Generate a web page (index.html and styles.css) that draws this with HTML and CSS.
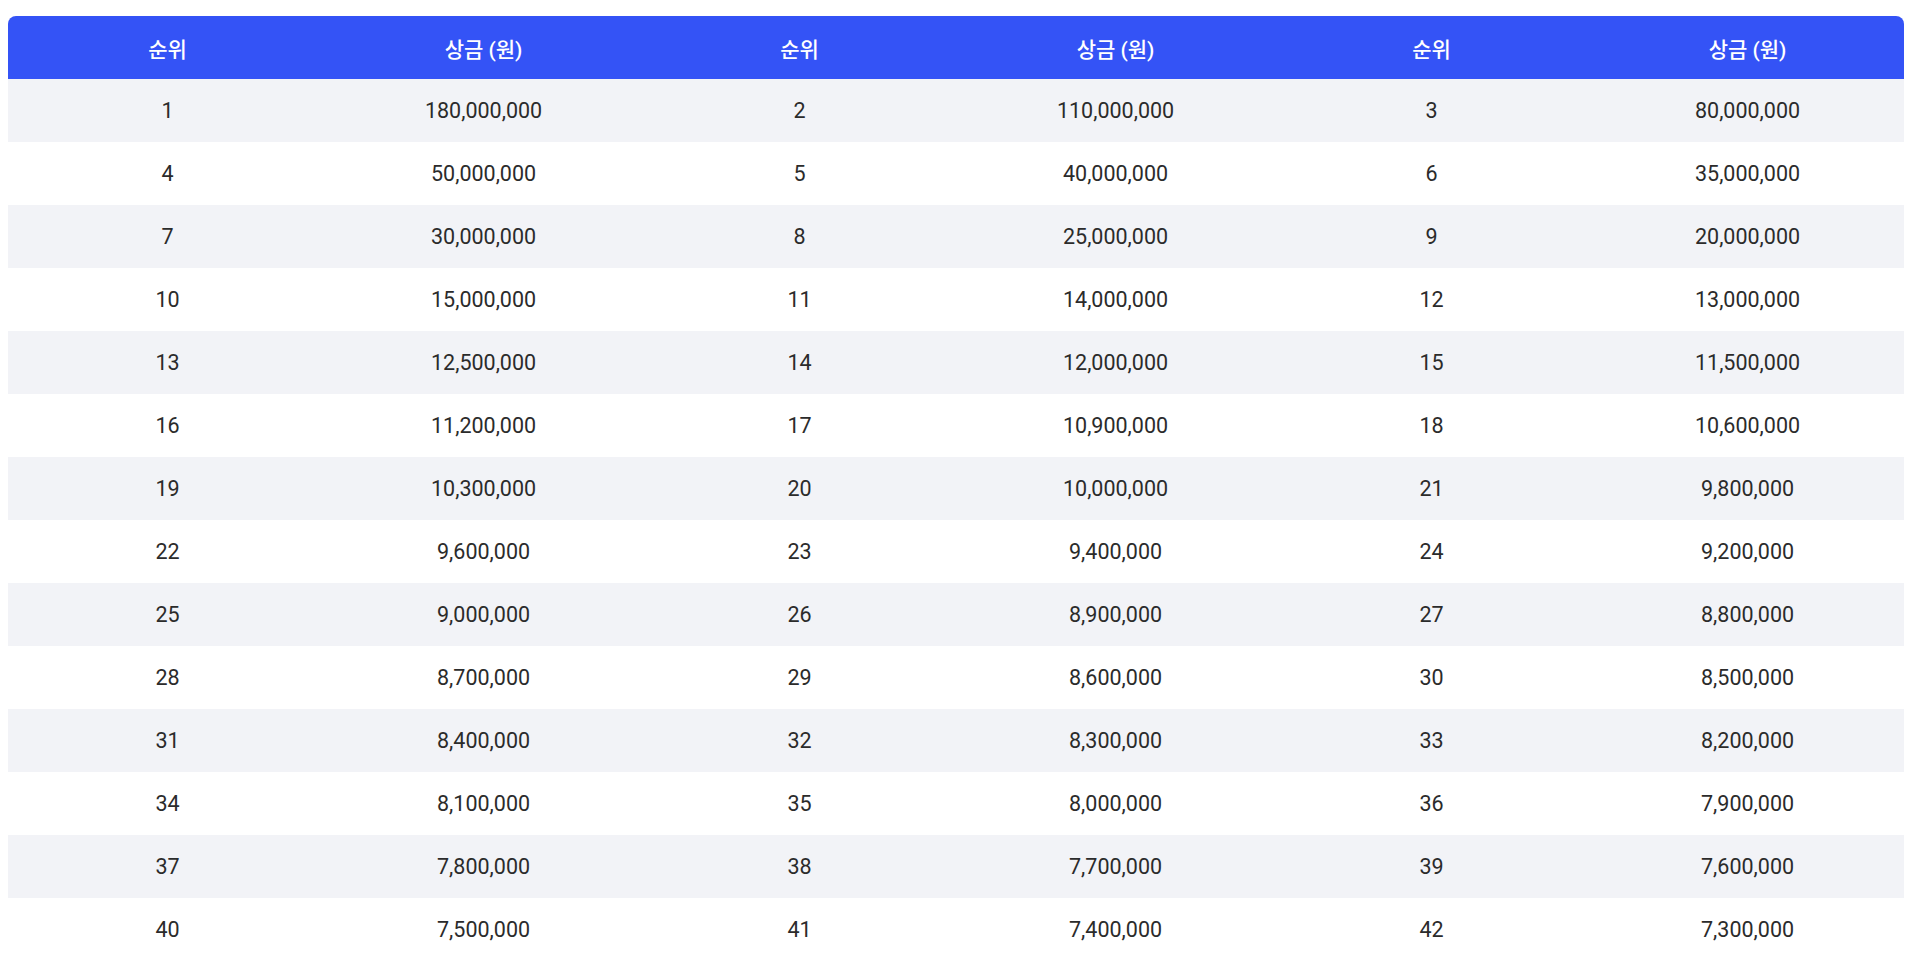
FILE: index.html
```html
<!DOCTYPE html>
<html lang="ko">
<head>
<meta charset="utf-8">
<title>상금표</title>
<link rel="stylesheet" href="styles.css">
</head>
<body>
<div class="wrap">
<table class="prize-table">
  <colgroup>
    <col class="c-rank"><col class="c-prize">
    <col class="c-rank"><col class="c-prize">
    <col class="c-rank"><col class="c-prize">
  </colgroup>
  <thead>
    <tr>
      <th>순위</th><th>상금 (원)</th>
      <th>순위</th><th>상금 (원)</th>
      <th>순위</th><th>상금 (원)</th>
    </tr>
  </thead>
  <tbody>
    <tr><td>1</td><td>180,000,000</td><td>2</td><td>110,000,000</td><td>3</td><td>80,000,000</td></tr>
    <tr><td>4</td><td>50,000,000</td><td>5</td><td>40,000,000</td><td>6</td><td>35,000,000</td></tr>
    <tr><td>7</td><td>30,000,000</td><td>8</td><td>25,000,000</td><td>9</td><td>20,000,000</td></tr>
    <tr><td>10</td><td>15,000,000</td><td>11</td><td>14,000,000</td><td>12</td><td>13,000,000</td></tr>
    <tr><td>13</td><td>12,500,000</td><td>14</td><td>12,000,000</td><td>15</td><td>11,500,000</td></tr>
    <tr><td>16</td><td>11,200,000</td><td>17</td><td>10,900,000</td><td>18</td><td>10,600,000</td></tr>
    <tr><td>19</td><td>10,300,000</td><td>20</td><td>10,000,000</td><td>21</td><td>9,800,000</td></tr>
    <tr><td>22</td><td>9,600,000</td><td>23</td><td>9,400,000</td><td>24</td><td>9,200,000</td></tr>
    <tr><td>25</td><td>9,000,000</td><td>26</td><td>8,900,000</td><td>27</td><td>8,800,000</td></tr>
    <tr><td>28</td><td>8,700,000</td><td>29</td><td>8,600,000</td><td>30</td><td>8,500,000</td></tr>
    <tr><td>31</td><td>8,400,000</td><td>32</td><td>8,300,000</td><td>33</td><td>8,200,000</td></tr>
    <tr><td>34</td><td>8,100,000</td><td>35</td><td>8,000,000</td><td>36</td><td>7,900,000</td></tr>
    <tr><td>37</td><td>7,800,000</td><td>38</td><td>7,700,000</td><td>39</td><td>7,600,000</td></tr>
    <tr><td>40</td><td>7,500,000</td><td>41</td><td>7,400,000</td><td>42</td><td>7,300,000</td></tr>
  </tbody>
</table>
</div>
</body>
</html>
```

FILE: styles.css
```css
html, body {
  margin: 0;
  padding: 0;
  background: #ffffff;
  overflow: hidden;
}

.wrap {
  padding: 16px 8px 8px;
}

.prize-table {
  width: 100%;
  table-layout: fixed;
  border-collapse: separate;
  border-spacing: 0;
  font-family: Roboto, "Noto Sans CJK KR", sans-serif;
}

.c-rank { width: 16.83%; }
.c-prize { width: 16.5%; }

.prize-table th {
  height: 63px;
  padding: 0;
  background: #3453f6;
  color: #ffffff;
  font-family: Roboto, "Noto Sans CJK KR", sans-serif;
  font-size: 21px;
  font-weight: 500;
  text-align: center;
  vertical-align: middle;
}

.prize-table thead th:first-child { border-top-left-radius: 8px; }
.prize-table thead th:last-child { border-top-right-radius: 8px; }

.prize-table td {
  height: 63px;
  padding: 0;
  color: #2b2b2b;
  font-size: 21.5px;
  font-weight: 400;
  text-align: center;
  vertical-align: middle;
}

.prize-table tbody tr:nth-child(odd) td {
  background: #f2f3f7;
}
```
